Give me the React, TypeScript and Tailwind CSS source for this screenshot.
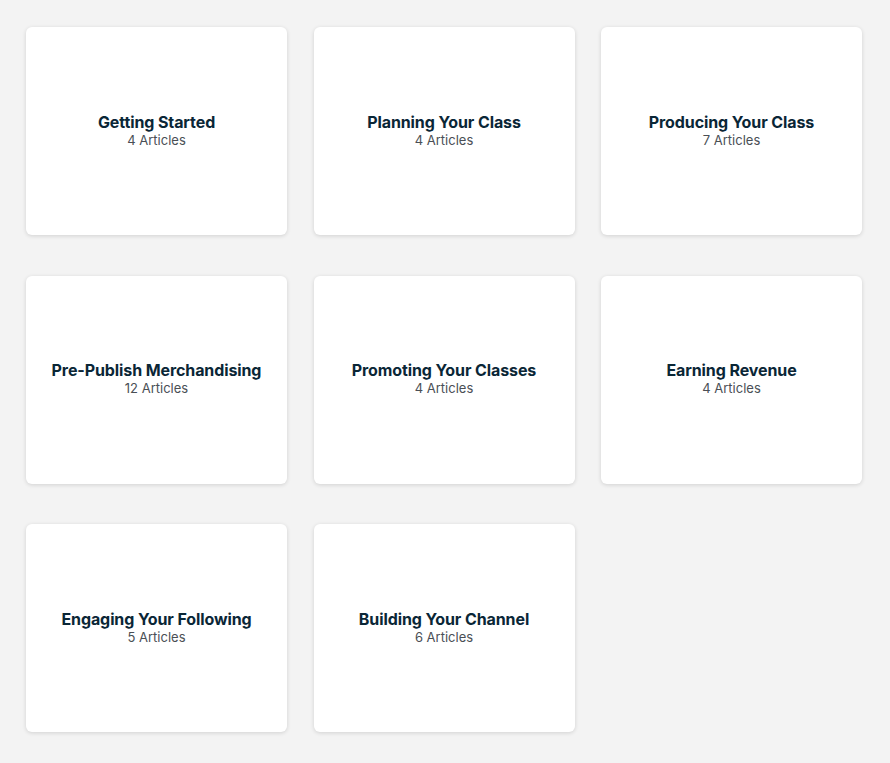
import React from "react";

const items = [
  { t: "Getting Started", n: "4 Articles" },
  { t: "Planning Your Class", n: "4 Articles" },
  { t: "Producing Your Class", n: "7 Articles" },
  { t: "Pre-Publish Merchandising", n: "12 Articles" },
  { t: "Promoting Your Classes", n: "4 Articles" },
  { t: "Earning Revenue", n: "4 Articles" },
  { t: "Engaging Your Following", n: "5 Articles" },
  { t: "Building Your Channel", n: "6 Articles" },
];

export default function App() {
  return (
    <div
      className="min-h-[763px] w-[890px] bg-[#f3f3f3] pl-[26px] pt-[27px]"
      style={{ fontFamily: "Inter, 'Noto Sans', sans-serif" }}
    >
      <div className="grid grid-cols-[261px_261px_261px] gap-x-[26.5px] gap-y-[40.5px]">
        {items.map((it) => (
          <div
            key={it.t}
            className="flex h-[208px] flex-col items-center justify-center rounded-[6px] bg-white pb-[1px] shadow-[0_1px_4px_rgba(0,0,0,0.14)]"
          >
            <div className="text-[16px] font-bold leading-[19px] tracking-[-0.1px] text-[#0a2636]">
              {it.t}
            </div>
            <div className="text-[13px] leading-[17px] text-[#4a4f55]">{it.n}</div>
          </div>
        ))}
      </div>
    </div>
  );
}
